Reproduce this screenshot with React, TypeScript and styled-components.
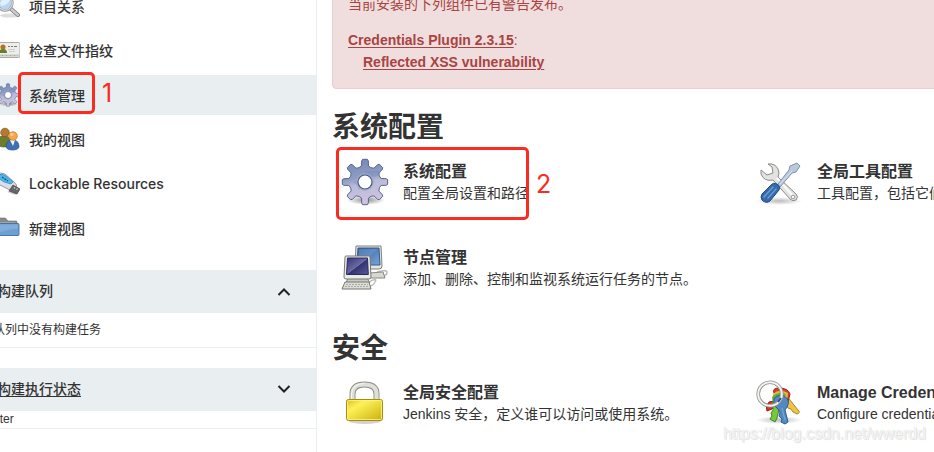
import React from "react";
import styled, { createGlobalStyle, css } from "styled-components";

const GlobalStyle = createGlobalStyle`
  *, *::before, *::after { box-sizing: border-box; }
  body {
    margin: 0;
    overflow: hidden;
    background: #fff;
    color: #333;
    font: 14px/22px "Liberation Sans", "Noto Sans CJK SC", sans-serif;
  }
`;

const Page = styled.div`
  position: relative;
  display: grid;
  grid-template-columns: 317px minmax(0, 1fr);
  min-height: 100vh;
  overflow: hidden;
`;

const Sidebar = styled.aside`
  border-right: 1px solid #e9eef1;
  overflow: hidden;
  max-height: 100vh;
`;

const TaskList = styled.nav`
  display: flex;
  flex-direction: column;
  justify-content: space-between;
  height: 262px;
  margin-top: -14px;
`;

const TaskLink = styled.a<{ $active?: boolean }>`
  display: flex;
  align-items: center;
  gap: 9px;
  height: 40px;
  margin-left: -4px;
  color: #333;
  font-weight: 500;
  text-decoration: none;
  ${(p) => p.$active && css`background: #e9eef1;`}
`;

const TaskLabel = styled.span<{ $latin?: boolean }>`
  padding-top: 2px;
  ${(p) => p.$latin && css`
    padding-top: 0;
    font-family: Inter, "Liberation Sans", sans-serif;
  `}
`;

const Pane = styled.section`
  margin-top: 20px;
  border-bottom: 1px solid #e9eef1;
  &:first-of-type { margin-top: 22px; }
`;

const PaneHeader = styled.header`
  display: flex;
  align-items: center;
  justify-content: space-between;
  height: 43px;
  padding: 0 24px 4px 0;
  background: #e9eef1;
`;

const PaneTitle = styled.h2`
  margin: 0 0 0 -3px;
  padding-top: 2px;
  font-size: 14px;
  font-weight: 500;
  a { color: inherit; text-underline-offset: 2px; }
`;

const Toggle = styled.button`
  display: flex;
  padding: 4px 0 0;
  border: 0;
  background: none;
  color: #222;
`;

const QueueText = styled.p`
  margin: 0 0 0 -7px;
  padding: 6px 0;
  font-size: 12px;
`;

const NodeName = styled.p`
  margin: 0 0 0 -23px;
  font-size: 12px;
  line-height: 17px;
`;

const Main = styled.main`
  padding-left: 15px;
  overflow: hidden;
  white-space: nowrap;
`;

const Alert = styled.div`
  margin: -23px -8px 0 0;
  padding: 15px;
  border: 1px solid #ebccd1;
  border-radius: 4px;
  background: #f0dede;
  color: #a94442;
  a { color: inherit; font-weight: 700; text-underline-offset: 2px; }
  p, dl, dd { margin: 0; }
  dl { margin-top: 14px; }
  dd { padding-left: 15px; }
`;

const Group = styled.section`
  margin-top: 18px;
  & + & { margin-top: 36px; }
`;

const GroupTitle = styled.h2`
  margin: 0 0 10px;
  padding-top: 1px;
  font-size: 28px;
  line-height: 40px;
  font-weight: 700;
`;

const Cards = styled.div`
  display: grid;
  grid-template-columns: repeat(2, minmax(414px, 1fr));
  row-gap: 38px;
  padding-left: 9px;
`;

const Card = styled.a`
  display: flex;
  align-items: center;
  gap: 14px;
  color: #333;
  text-decoration: none;
  svg { flex: none; }
`;

const CardTitle = styled.strong`
  display: block;
  font-size: 16px;
  line-height: 24px;
  font-weight: 700;
`;

const CardText = styled.span`
  display: block;
  margin-top: -2px;
`;

const Mark = styled.div<{ $x: number; $y: number; $w: number; $h: number }>`
  position: absolute;
  left: ${(p) => p.$x}px;
  top: ${(p) => p.$y}px;
  width: ${(p) => p.$w}px;
  height: ${(p) => p.$h}px;
  border: 3px solid #fa2b20;
  border-radius: 5px;
  display: flex;
  align-items: center;
  pointer-events: none;
`;

const MarkNumber = styled.span`
  position: absolute;
  left: 100%;
  margin-left: 10px;
  color: #fa2b20;
  font: 25px/28px Inter, "Liberation Sans", sans-serif;
`;

const Watermark = styled.div`
  position: absolute;
  right: 8px;
  bottom: 6px;
  color: rgba(255, 255, 255, 0.8);
  font-size: 16px;
  line-height: 24px;
  text-shadow: 0 0 1px #ccc, 1px 1px 1px #e2e2e2;
  pointer-events: none;
`;

function gearPath(c: number, outer: number, inner: number) {
  const pts: string[] = [];
  const at = (r: number, deg: number) => {
    const a = (deg * Math.PI) / 180;
    return `${(c + r * Math.cos(a)).toFixed(2)} ${(c + r * Math.sin(a)).toFixed(2)}`;
  };
  for (let i = 0; i < 8; i++) {
    const d = i * 45;
    pts.push(at(inner, d - 12), at(outer - 1.5, d - 9), at(outer, d - 6), at(outer, d + 6), at(outer - 1.5, d + 9), at(inner, d + 12), at(inner - 1, d + 22));
  }
  return `M${pts.join("L")}Z`;
}

const Gear = ({ size, id }: { size: number; id: string }) => (
  <svg width={size} height={size} viewBox="0 0 48 48" aria-hidden="true">
    <defs>
      <linearGradient id={id} x1="0" y1="0" x2="0.25" y2="1">
        <stop offset="0" stopColor="#6f86b4" />
        <stop offset=".45" stopColor="#8d9cc3" />
        <stop offset=".62" stopColor="#b9bad8" />
        <stop offset="1" stopColor="#cfc3df" />
      </linearGradient>
      <radialGradient id={`${id}s`}>
        <stop offset="0" stopColor="#000" stopOpacity=".45" />
        <stop offset="1" stopColor="#000" stopOpacity="0" />
      </radialGradient>
    </defs>
    <ellipse cx="25" cy="42" rx="19" ry="5" fill={`url(#${id}s)`} />
    <path d={gearPath(24, 22.8, 16.5)} fill={`url(#${id})`} stroke="#56658f" strokeWidth="1" strokeLinejoin="round" />
    <path d="M12 25q5-4 10-9 3-4 9-3 6-2 9 1-2 5-8 5l-14 13q-2-7-6-7Z" fill="#7187b8" opacity=".35" />
    <circle cx="24" cy="24" r="9" fill="#a6accd" opacity=".7" />
    <circle cx="24" cy="24" r="7" fill="#fff" stroke="#4c5a83" strokeWidth="1.2" />
  </svg>
);

const Search = () => (
  <svg width="24" height="24" viewBox="0 0 24 24" aria-hidden="true">
    <ellipse cx="14" cy="21.5" rx="10" ry="2" fill="#ddd" />
    <path d="m14.5 14.5 7.5 6.5" stroke="#777" strokeWidth="4" strokeLinecap="round" />
    <path d="m14.5 14.5 7.5 6.5" stroke="#ccc" strokeWidth="2.4" strokeLinecap="round" />
    <circle cx="9" cy="9" r="7.5" fill="#b5d7f5" stroke="#999" strokeWidth="2.4" />
    <circle cx="9" cy="9" r="7.3" fill="none" stroke="#e8e8e8" strokeWidth="1" />
    <path d="M4 9q3-6 10-4-1 6-9 7Z" fill="#e0f0ff" />
  </svg>
);

const IdCard = () => (
  <svg width="24" height="24" viewBox="0 0 24 24" aria-hidden="true">
    <rect x="-2" y="4.5" width="26" height="15" rx="1.5" fill="#eeeeea" stroke="#aaa" />
    <path d="M0 16.5h23v2H0Z" fill="#c8c8c2" />
    <path d="M2.5 17v1m4-1v1m4-1v1m4-1v1m4-1v1" stroke="#999" strokeWidth=".7" />
    <circle cx="7" cy="9" r="2.6" fill="#b57324" />
    <path d="M3 15q0-4 4-4t4 4Z" fill="#658028" />
    <path d="M12 8.5h2m1 0h2m1 0h3" stroke="#777" />
    <path d="M12 11.5h7m-6 2h6" stroke="#ccc" />
  </svg>
);

const People = () => (
  <svg width="24" height="24" viewBox="0 0 24 24" aria-hidden="true">
    <path d="M1 16q0-7 7-7t8 7q-2 4-8 4t-7-4Z" fill="#6d7d2e" stroke="#4e5b1d" strokeWidth=".7" />
    <circle cx="9" cy="5.5" r="4.3" fill="#b87830" stroke="#825019" strokeWidth=".7" />
    <path d="M10 20q0-7 6.5-7t6.5 7q-1 3-6.5 3T10 20Z" fill="#3f70b2" stroke="#28518e" strokeWidth=".7" />
    <path d="m14 13 3 6 2-6Z" fill="#f5f5f5" />
    <circle cx="17" cy="9" r="4.3" fill="#f5a84b" stroke="#c8771c" strokeWidth=".7" />
    <circle cx="15.8" cy="7.5" r="1.6" fill="#ffd28e" />
  </svg>
);

const Usb = () => (
  <svg width="24" height="24" viewBox="0 0 24 24" aria-hidden="true">
    <path d="m13 19 9 2-3 2-8-3Z" fill="#d3d3dc" />
    <path d="M0 2q5-2 9 0l9 8q4 3 2 6-3 4-6 2L0 11Z" fill="#dddde9" stroke="#9898ae" />
    <path d="M2 3q4-2 8 1l7 6-2 2Q8 11 2 6Z" fill="#4fb8ea" stroke="#288bc4" strokeWidth=".8" />
    <path d="m6 5 6 4" stroke="#16588d" strokeWidth="1.5" strokeDasharray="2 1" />
    <path d="m17 13 7 4-3 5-8-3Z" fill="#666" stroke="#444" strokeWidth=".7" />
    <path d="m18 15.5 1 .6m1.5.7 1 .5" stroke="#ddd" strokeWidth="1.3" />
  </svg>
);

const Folder = () => (
  <svg width="24" height="24" viewBox="0 0 24 24" aria-hidden="true">
    <path d="M0 3q0-1 1-1h8q1 0 2 2l1 1h8q1 0 1 1v13H0Z" fill="#888a87" stroke="#6b6d69" strokeWidth=".6" />
    <path d="M1 7h18" stroke="#bbb" />
    <path d="M1 7.5h21q1 0 1 1v10q0 1-1 1H2Z" fill="#6d9fd3" stroke="#3e71aa" strokeWidth=".9" />
    <path d="M1.5 8.5h20.3v4Q11 13 2 17Z" fill="#8fb8e0" opacity=".6" />
  </svg>
);

const Computers = () => (
  <svg width="48" height="48" viewBox="0 0 48 48" aria-hidden="true">
    <defs>
      <linearGradient id="screenBack" x2="1" y2="1"><stop stopColor="#315d9f" /><stop offset="1" stopColor="#76a5da" /></linearGradient>
      <linearGradient id="screenFront" x2="1" y2="1"><stop stopColor="#34347b" /><stop offset=".5" stopColor="#6b6ba5" /><stop offset=".52" stopColor="#33336f" /><stop offset="1" stopColor="#5b5b9c" /></linearGradient>
    </defs>
    <path d="M36 28q11-3 10 1t-9 3" fill="none" stroke="#bbb" strokeWidth="1.5" />
    <path d="m28 29 14-1 2 6H26Z" fill="#d7d8d2" stroke="#888" />
    <path d="M15 2h25l1 20q0 3-3 3H16q-2 0-2-3Z" fill="#e4e5de" stroke="#81837a" />
    <path d="M17 4h21l1 17H16Z" fill="url(#screenBack)" stroke="#37598c" />
    <path d="M18 5h19l-8 7q-5 2-11 1Z" fill="#7aa2d1" opacity=".4" />
    <path d="M28 38q9-5 6 0t-7 4" fill="none" stroke="#bbb" strokeWidth="1.4" />
    <path d="M7 34h19l3 5H5Z" fill="#c8c9c2" stroke="#888" />
    <path d="M5 12h23q1 0 1 1l1 20q0 2-2 2H5q-2 0-2-2l1-20q0-1 1-1Z" fill="#ecece6" stroke="#777970" />
    <path d="M6.5 14h20l.8 16.5H5.5Z" fill="url(#screenFront)" stroke="#292962" />
    <path d="m4 38 24 0 2 7H1Z" fill="#dcddd7" stroke="#777970" />
    <path d="M5 40.5h22M4 42.5h24" stroke="#aaaca4" strokeDasharray="2 1" />
  </svg>
);

const Lock = () => (
  <svg width="48" height="48" viewBox="0 0 48 48" aria-hidden="true">
    <defs>
      <linearGradient id="brass" x2="1" y2="1"><stop stopColor="#d9bf19" /><stop offset=".3" stopColor="#fff05a" /><stop offset=".55" stopColor="#eadb3c" /><stop offset="1" stopColor="#cbae0c" /></linearGradient>
    </defs>
    <ellipse cx="24" cy="42" rx="16" ry="3" fill="#d2d2d2" />
    <path d="M11.5 23v-8Q11.5 5.5 23.5 5.5T35.5 15v8" fill="none" stroke="#8e9088" strokeWidth="6" />
    <path d="M11.5 23v-8Q11.5 5.5 23.5 5.5T35.5 15v8" fill="none" stroke="#dedfd9" strokeWidth="4.2" />
    <path d="M10.5 22v-7Q11 4.5 23.5 4.5" fill="none" stroke="#f7f7f4" />
    <rect x="5.5" y="20.5" width="36" height="21" rx="2" fill="url(#brass)" stroke="#a88c08" />
    <rect x="6.5" y="21.5" width="34" height="19" rx="1" fill="none" stroke="#fff482" opacity=".8" />
  </svg>
);

const Tools = () => (
  <svg width="48" height="48" viewBox="0 0 48 48" aria-hidden="true">
    <defs>
      <radialGradient id="toolShade"><stop stopColor="#bbb" /><stop offset="1" stopColor="#fff" /></radialGradient>
    </defs>
    <ellipse cx="24" cy="43" rx="23" ry="4" fill="url(#toolShade)" />
    <path d="M13 6q7-1 10 5 2 4 0 8l18 17q3 3 0 6-3 2-6-1L18 22q-9 2-12-6l0-4 6 5 6-2-1-6Z" fill="#e2e3e1" stroke="#8b8d89" />
    <path d="m22 20 16 18" stroke="#fafafa" strokeWidth="2" />
    <circle cx="38" cy="39" r="1.8" fill="#fff" stroke="#999" />
    <path d="m23 26 11-14 1-4 7-3 3 3-4 6-4 1-12 14Z" fill="#b9c9db" stroke="#7c94b0" />
    <path d="m25 26 12-13" stroke="#dde5ee" />
    <path d="M16 27q2-3 6-1 4 3 2 6L15 43q-4 3-8-1-2-3 0-6Z" fill="#336bad" stroke="#214b85" />
    <path d="m18 29-9 10m12-8-8 9" stroke="#6b9bd2" strokeWidth="1.5" strokeLinecap="round" />
  </svg>
);

const Keys = () => (
  <svg width="48" height="48" viewBox="0 0 48 48" aria-hidden="true">
    <defs>
      <radialGradient id="keyShade"><stop stopColor="#bbb" /><stop offset="1" stopColor="#fff" /></radialGradient>
    </defs>
    <ellipse cx="24" cy="41" rx="23" ry="4" fill="url(#keyShade)" />
    <path d="M14 23q-4 5-2 9l5-2 8-9Z" fill="#d93530" stroke="#9e1714" />
    <path d="m31 16 12 15q3 3-1 4l-4-2-2-3-3-1-5-8Z" fill="#edc34b" stroke="#b1861a" />
    <path d="M19 14q-2-5 5-5 9 0 11 6l-2 8-10-2Z" fill="#d63b2b" stroke="#9d231a" />
    <path d="M18 15q6-6 15-1l-1 9H19Z" fill="#e6b839" />
    <path d="m21 17 5 5-4 17-2 4-5-3 2-3-1-3 2-3v-8Z" fill="#77c83e" stroke="#438420" />
    <path d="M17 18q6-6 14-3l-5 12-8-1Z" fill="#65ae36" />
    <path d="M19 20q3-5 10-3 7 4 3 11l-2 3 3 12-3 2-4-2 1-3-3-3 1-4-2-3q-5-3-4-7Z" fill="#5388c3" stroke="#285c99" />
    <path d="m27 29 3 12" stroke="#7fabd8" strokeWidth="1" />
    <circle cx="15" cy="15" r="11.8" fill="none" stroke="#92948f" strokeWidth="3.6" />
    <circle cx="15" cy="15" r="11.8" fill="none" stroke="#f2f2f0" strokeWidth="2" />
    <path d="m23 23 3-4" stroke="#264d80" strokeWidth="2" />
  </svg>
);

const Chevron = ({ up }: { up?: boolean }) => (
  <svg width="16" height="12" viewBox="0 0 16 12" fill="none" stroke="currentColor" strokeWidth="2" aria-hidden="true">
    <path d={up ? "m2.5 9 5.5-5.5 5.5 5.5" : "m2.5 2 5.5 5.5 5.5-5.5"} />
  </svg>
);

const tasks = [
  { label: "项目关系", icon: <Search /> },
  { label: "检查文件指纹", icon: <IdCard /> },
  { label: "系统管理", icon: <Gear size={24} id="gearSmall" />, active: true },
  { label: "我的视图", icon: <People /> },
  { label: "Lockable Resources", icon: <Usb />, latin: true },
  { label: "新建视图", icon: <Folder /> },
];

const groups = [
  {
    title: "系统配置",
    cards: [
      { title: "系统配置", text: "配置全局设置和路径", icon: <Gear size={48} id="gearLarge" /> },
      { title: "全局工具配置", text: "工具配置，包括它们的位置和自动安装器", icon: <Tools /> },
      { title: "节点管理", text: "添加、删除、控制和监视系统运行任务的节点。", icon: <Computers /> },
    ],
  },
  {
    title: "安全",
    cards: [
      { title: "全局安全配置", text: "Jenkins 安全，定义谁可以访问或使用系统。", icon: <Lock /> },
      { title: "Manage Credentials", text: "Configure credentials", icon: <Keys /> },
    ],
  },
];

export default function App() {
  return (
    <Page lang="zh-CN">
      <GlobalStyle />
      <Sidebar>
        <TaskList>
          {tasks.map((t) => (
            <TaskLink key={t.label} href="#" $active={t.active}>
              {t.icon}
              <TaskLabel $latin={t.latin}>{t.label}</TaskLabel>
            </TaskLink>
          ))}
        </TaskList>
        <Pane>
          <PaneHeader>
            <PaneTitle>构建队列</PaneTitle>
            <Toggle type="button" aria-label="收起构建队列"><Chevron up /></Toggle>
          </PaneHeader>
          <QueueText>队列中没有构建任务</QueueText>
        </Pane>
        <Pane>
          <PaneHeader>
            <PaneTitle><a href="#">构建执行状态</a></PaneTitle>
            <Toggle type="button" aria-label="展开构建执行状态"><Chevron /></Toggle>
          </PaneHeader>
          <NodeName>master</NodeName>
        </Pane>
      </Sidebar>
      <Main>
        <Alert>
          <p>当前安装的下列组件已有警告发布。</p>
          <dl>
            <dt><a href="#">Credentials Plugin 2.3.15</a>:</dt>
            <dd><a href="#">Reflected XSS vulnerability</a></dd>
          </dl>
        </Alert>
        {groups.map((g) => (
          <Group key={g.title}>
            <GroupTitle>{g.title}</GroupTitle>
            <Cards>
              {g.cards.map((c) => (
                <Card key={c.title} href="#">
                  {c.icon}
                  <span>
                    <CardTitle>{c.title}</CardTitle>
                    <CardText>{c.text}</CardText>
                  </span>
                </Card>
              ))}
            </Cards>
          </Group>
        ))}
      </Main>
      <Mark $x={18} $y={72} $w={77} $h={42}><MarkNumber>1</MarkNumber></Mark>
      <Mark $x={336} $y={147} $w={193} $h={73}><MarkNumber>2</MarkNumber></Mark>
      <Watermark>https://blog.csdn.net/wwerdd</Watermark>
    </Page>
  );
}
